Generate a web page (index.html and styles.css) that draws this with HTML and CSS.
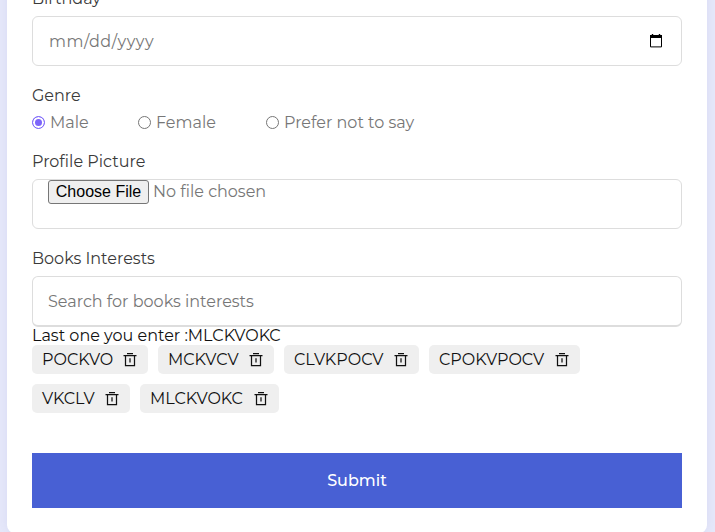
FILE: index.html
```html
<!DOCTYPE html>
<html lang="en">
<head>
<meta charset="utf-8">
<title>Profile form</title>
<link rel="stylesheet" href="styles.css">
</head>
<body>
<svg class="defs" width="0" height="0"><symbol id="trash" viewBox="0 0 14 14"><path d="M4 .5h6M.5 2.5h13M2.5 2.5v10h9v-10M7 5.2v4.3" fill="none" stroke="currentColor" stroke-width="1.25"/></symbol></svg>
<form class="card">
  <div class="label birthday">Birthday</div>
  <div class="field date"><span class="date-text">mm/dd/yyyy</span>
    <svg class="calendar" width="14" height="16" viewBox="0 0 14 16"><path d="M1.5 3.5h11v10.4h-11z" fill="none" stroke="#000"/><path d="M1 2h12v3H1zM2.8 1h1.4v2H2.8zM9.8 1h1.4v2H9.8z"/></svg>
  </div>
  <div class="label genre">Genre</div>
  <div class="options">
    <div class="option first"><span class="radio checked"></span><span>Male</span></div>
    <div class="option second"><span class="radio"></span><span>Female</span></div>
    <div class="option"><span class="radio"></span><span>Prefer not to say</span></div>
  </div>
  <div class="label profile">Profile Picture</div>
  <div class="field file"><span class="choose">Choose File</span><span>No file chosen</span></div>
  <div class="label books">Books Interests</div>
  <div class="field search"><span>Search for books interests</span></div>
  <div class="last">Last one you enter :MLCKVOKC</div>
  <div class="chips">
    <div class="chip c1"><span>POCKVO</span><svg class="trash"><use href="#trash"/></svg></div>
    <div class="chip c2"><span>MCKVCV</span><svg class="trash"><use href="#trash"/></svg></div>
    <div class="chip c3"><span>CLVKPOCV</span><svg class="trash"><use href="#trash"/></svg></div>
    <div class="chip c4"><span>CPOKVPOCV</span><svg class="trash"><use href="#trash"/></svg></div>
    <div class="chip c5"><span>VKCLV</span><svg class="trash"><use href="#trash"/></svg></div>
    <div class="chip c6"><span>MLCKVOKC</span><svg class="trash"><use href="#trash"/></svg></div>
  </div>
  <div class="submit"><span>Submit</span></div>
</form>
</body>
</html>
```
FILE: styles.css
```css
* { box-sizing: border-box; }
body {
  margin: 0;
  height: 532px;
  overflow: hidden;
  background: #e6e8fa;
  font: 400 16px/20px Montserrat, Inter, sans-serif;
  color: #111;
}
.defs { display: block; }
.card {
  width: 700px;
  height: 573px;
  margin: -40px 0 0 7px;
  padding: 29px 25px 25px;
  background: #fff;
  border-radius: 8px;
  box-shadow: 0 0 12px rgba(70, 80, 160, .08);
  white-space: nowrap;
}
.label { height: 20px; margin-bottom: 7px; color: #3a3a3a; }
.field {
  display: flex;
  align-items: center;
  height: 50px;
  margin-bottom: 20px;
  padding: 2px 15px 0;
  border: 1px solid #ddd;
  border-radius: 6px;
  color: #777;
}
.date { justify-content: space-between; padding: 2px 18px 0 16px; }
.date-text { letter-spacing: .55px; }
.calendar { display: block; margin-top: -2px; }
.options { display: flex; height: 20px; margin-bottom: 19px; color: #777; }
.option { display: flex; align-items: center; gap: 5px; }
.first { width: 106px; }
.second { width: 128px; }
.radio { width: 13px; height: 13px; margin-top: -1px; border: 1px solid #767676; border-radius: 50%; }
.checked { border-color: #7c65fa; background: #7c65fa; box-shadow: inset 0 0 0 2px #fff; }
.file { align-items: flex-start; gap: 4px; padding-top: 0; line-height: 24px; }
.choose {
  height: 24px;
  width: 101px;
  border: 1px solid #767676;
  border-radius: 3px;
  background: #efefef;
  color: #000;
  font: 400 16px/22px "Liberation Sans", sans-serif;
  text-align: center;
}
.search { height: 51px; margin: 0; border-bottom: 2px solid #ddd; }
.last { height: 18px; line-height: 18px; }
.chips { display: flex; flex-wrap: wrap; gap: 10px; }
.chip {
  display: flex;
  align-items: center;
  justify-content: space-between;
  height: 29px;
  padding: 0 11px 0 10px;
  border-radius: 5px;
  background: #efefef;
}
.trash { width: 14px; height: 14px; }
.c1, .c2 { width: 116px; }
.c3 { width: 135px; }
.c4 { width: 151px; }
.c5 { width: 98px; }
.c6 { width: 139px; }
.submit {
  height: 55px;
  margin-top: 40px;
  background: #4860d4;
  color: #fff;
  font-weight: 500;
  line-height: 55px;
  text-align: center;
}
```
